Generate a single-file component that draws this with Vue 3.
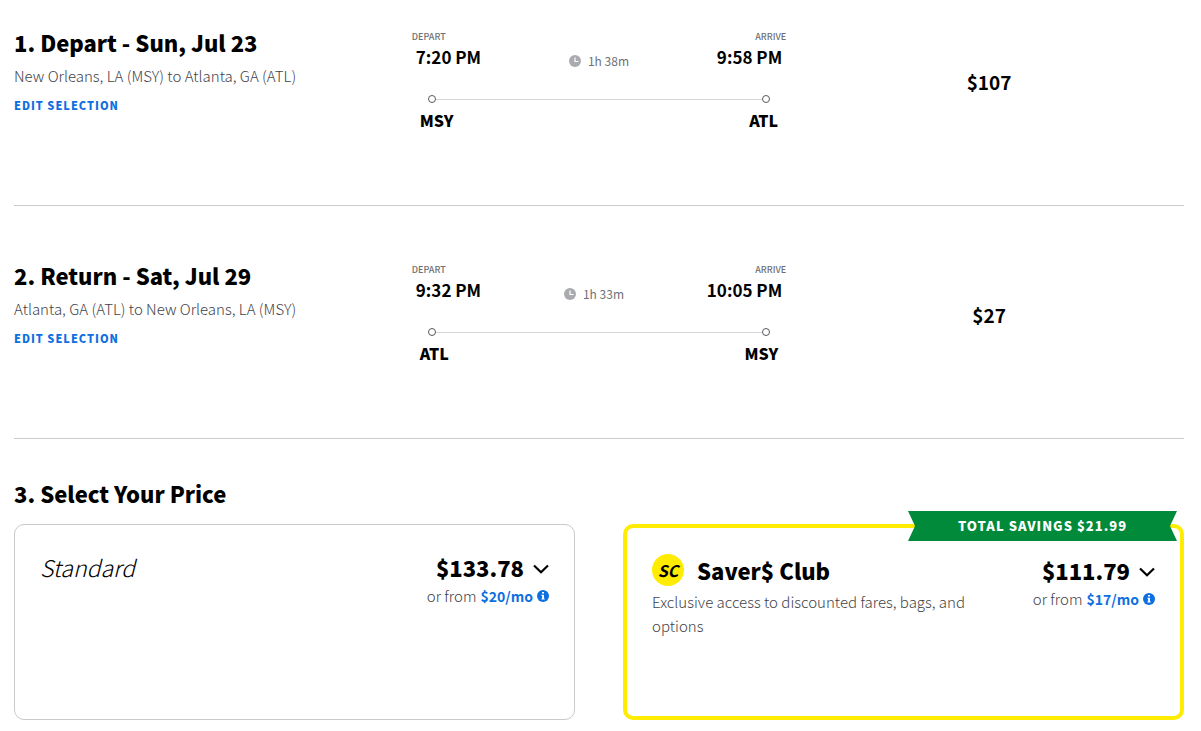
<script setup>
const trips = [
  {
    title: '1. Depart - Sun, Jul 23',
    route: 'New Orleans, LA (MSY) to Atlanta, GA (ATL)',
    from: 'MSY',
    to: 'ATL',
    departs: '7:20 PM',
    arrives: '9:58 PM',
    duration: '1h 38m',
    price: '$107',
  },
  {
    title: '2. Return - Sat, Jul 29',
    route: 'Atlanta, GA (ATL) to New Orleans, LA (MSY)',
    from: 'ATL',
    to: 'MSY',
    departs: '9:32 PM',
    arrives: '10:05 PM',
    duration: '1h 33m',
    price: '$27',
  },
]

const fares = [
  { name: 'Standard', price: '$133.78', monthly: '$20/mo' },
  {
    name: 'Saver$ Club',
    club: true,
    price: '$111.79',
    monthly: '$17/mo',
    note: 'Exclusive access to discounted fares, bags, and options',
    savings: 'TOTAL SAVINGS $21.99',
  },
]
</script>

<template>
  <main class="page">
    <section v-for="trip in trips" :key="trip.title" class="trip">
      <div class="summary">
        <h2 class="heading">{{ trip.title }}</h2>
        <p class="route">{{ trip.route }}</p>
        <a class="edit" href="#">EDIT SELECTION</a>
      </div>
      <div class="flight">
        <div class="labels"><span>DEPART</span><span>ARRIVE</span></div>
        <div class="times">
          <span>{{ trip.departs }}</span>
          <span class="duration">
            <svg width="12" height="12" viewBox="0 0 12 12" aria-hidden="true">
              <circle cx="6" cy="6" r="6" fill="#a9abae" />
              <path d="M6 2.5V6.5H9.5" fill="none" stroke="#fff" stroke-width="1.2" />
            </svg>
            {{ trip.duration }}
          </span>
          <span>{{ trip.arrives }}</span>
        </div>
        <div class="track"><i class="stop"></i><i class="line"></i><i class="stop"></i></div>
        <div class="airports"><span>{{ trip.from }}</span><span>{{ trip.to }}</span></div>
      </div>
      <p class="cost">{{ trip.price }}</p>
    </section>

    <section class="pricing">
      <h2 class="heading">3. Select Your Price</h2>
      <div class="fares">
        <article v-for="fare in fares" :key="fare.name" class="fare" :class="{ club: fare.club }">
          <div v-if="fare.savings" class="ribbon">{{ fare.savings }}</div>
          <div class="about">
            <h3 class="name">
              <span v-if="fare.club" class="badge">SC</span>
              {{ fare.name }}
            </h3>
            <p v-if="fare.note" class="note">{{ fare.note }}</p>
          </div>
          <div class="amounts">
            <button class="amount" type="button">
              {{ fare.price }}
              <svg width="16" height="14" viewBox="0 0 16 14" aria-hidden="true">
                <path d="M1 5.5L8 12.2L15 5.5" fill="none" stroke="#000" stroke-width="2.2" />
              </svg>
            </button>
            <p class="monthly">
              or from <a href="#">{{ fare.monthly }}</a>
              <svg width="12" height="12" viewBox="0 0 12 12" aria-hidden="true">
                <circle cx="6" cy="6" r="6" fill="#0d6fe0" />
                <path d="M5 2H7V3.6H5ZM4.4 4.7H7V8.6H7.7V9.6H4.4V8.6H5.1V5.7H4.4Z" fill="#fff" />
              </svg>
            </p>
          </div>
        </article>
      </div>
    </section>
  </main>
</template>

<style>
body {
  background: #fff;
}
</style>

<style scoped>
.page {
  padding: 0 17px 11px 14px;
  font-family: "Noto Sans CJK SC", "Noto Sans", sans-serif;
  font-size: 15px;
  line-height: 24px;
  color: #000;
}
h2, h3, p {
  margin: 0;
}
a {
  color: #0d6fe0;
  text-decoration: none;
}
.trip {
  display: grid;
  grid-template-columns: 34fr 32fr 34fr;
  padding: 53px 0 73px;
  border-bottom: 1px solid #c9cacc;
}
.trip:first-child {
  padding-top: 26px;
}
.heading {
  font-size: 22px;
  line-height: 32px;
  font-weight: 900;
}
.route {
  margin-top: 6px;
  font-weight: 300;
  color: #3f4349;
}
.edit {
  display: block;
  margin-top: 5px;
  font-size: 11px;
  font-weight: 900;
  letter-spacing: 1px;
}
.labels,
.times,
.airports {
  display: flex;
  justify-content: space-between;
}
.labels {
  font-size: 9px;
  line-height: 12px;
  font-weight: 500;
  color: #6d7075;
  padding-top: 5px;
}
.times {
  padding: 1px 4px 0;
  font-size: 17px;
  line-height: 26px;
  font-weight: 700;
}
.duration {
  display: flex;
  align-items: center;
  gap: 7px;
  padding-top: 4px;
  font-size: 12px;
  font-weight: 400;
  color: #6d7075;
}
.track {
  display: flex;
  align-items: center;
  margin: 21px 16px 0;
}
.stop {
  box-sizing: border-box;
  width: 8px;
  height: 8px;
  border: 1px solid #55595f;
  border-radius: 50%;
}
.line {
  flex: 1;
  height: 1px;
  background: #d5d6d8;
}
.airports {
  padding: 5px 8px 0;
  font-size: 16px;
  line-height: 24px;
  font-weight: 900;
}
.cost {
  padding-top: 40px;
  padding-left: 8px;
  text-align: center;
  font-size: 19px;
  line-height: 32px;
  font-weight: 700;
}
.pricing {
  padding-top: 38px;
}
.fares {
  display: grid;
  grid-template-columns: 1fr 1fr;
  gap: 48px;
  margin-top: 15px;
}
.fare {
  position: relative;
  display: flex;
  justify-content: space-between;
  box-sizing: border-box;
  min-height: 196px;
  padding: 26px 25px;
  border: 1px solid #c9cacc;
  border-radius: 10px;
}
.club {
  border: 4px solid #ffec00;
}
.ribbon {
  position: absolute;
  top: -17px;
  right: 3px;
  width: 269px;
  line-height: 30px;
  text-align: center;
  font-size: 13px;
  font-weight: 900;
  letter-spacing: 1px;
  color: #fff;
  background: #008a3a;
  clip-path: polygon(0 0, 100% 0, calc(100% - 7px) 50%, 100% 100%, 0 100%, 7px 50%);
}
.about {
  max-width: 330px;
}
.name {
  display: flex;
  align-items: center;
  gap: 13px;
  font-size: 23px;
  line-height: 32px;
  font-weight: 300;
  font-style: italic;
}
.club .name {
  font-size: 22px;
  font-weight: 900;
  font-style: normal;
}
.badge {
  width: 32px;
  border-radius: 50%;
  background: #ffec00;
  text-align: center;
  font-size: 16px;
  font-weight: 700;
  font-style: italic;
}
.note {
  margin-top: 4px;
  font-weight: 300;
  color: #3f4349;
}
.amounts {
  text-align: right;
}
.amount {
  display: flex;
  align-items: center;
  justify-content: flex-end;
  gap: 9px;
  width: 100%;
  padding: 0;
  border: 0;
  background: none;
  font: inherit;
  font-size: 22px;
  line-height: 32px;
  font-weight: 900;
  color: #000;
}
.monthly {
  display: flex;
  align-items: center;
  gap: 4px;
  margin-top: 1px;
  font-weight: 300;
  color: #3f4349;
}
.monthly a {
  font-size: 14px;
  font-weight: 700;
}
</style>
